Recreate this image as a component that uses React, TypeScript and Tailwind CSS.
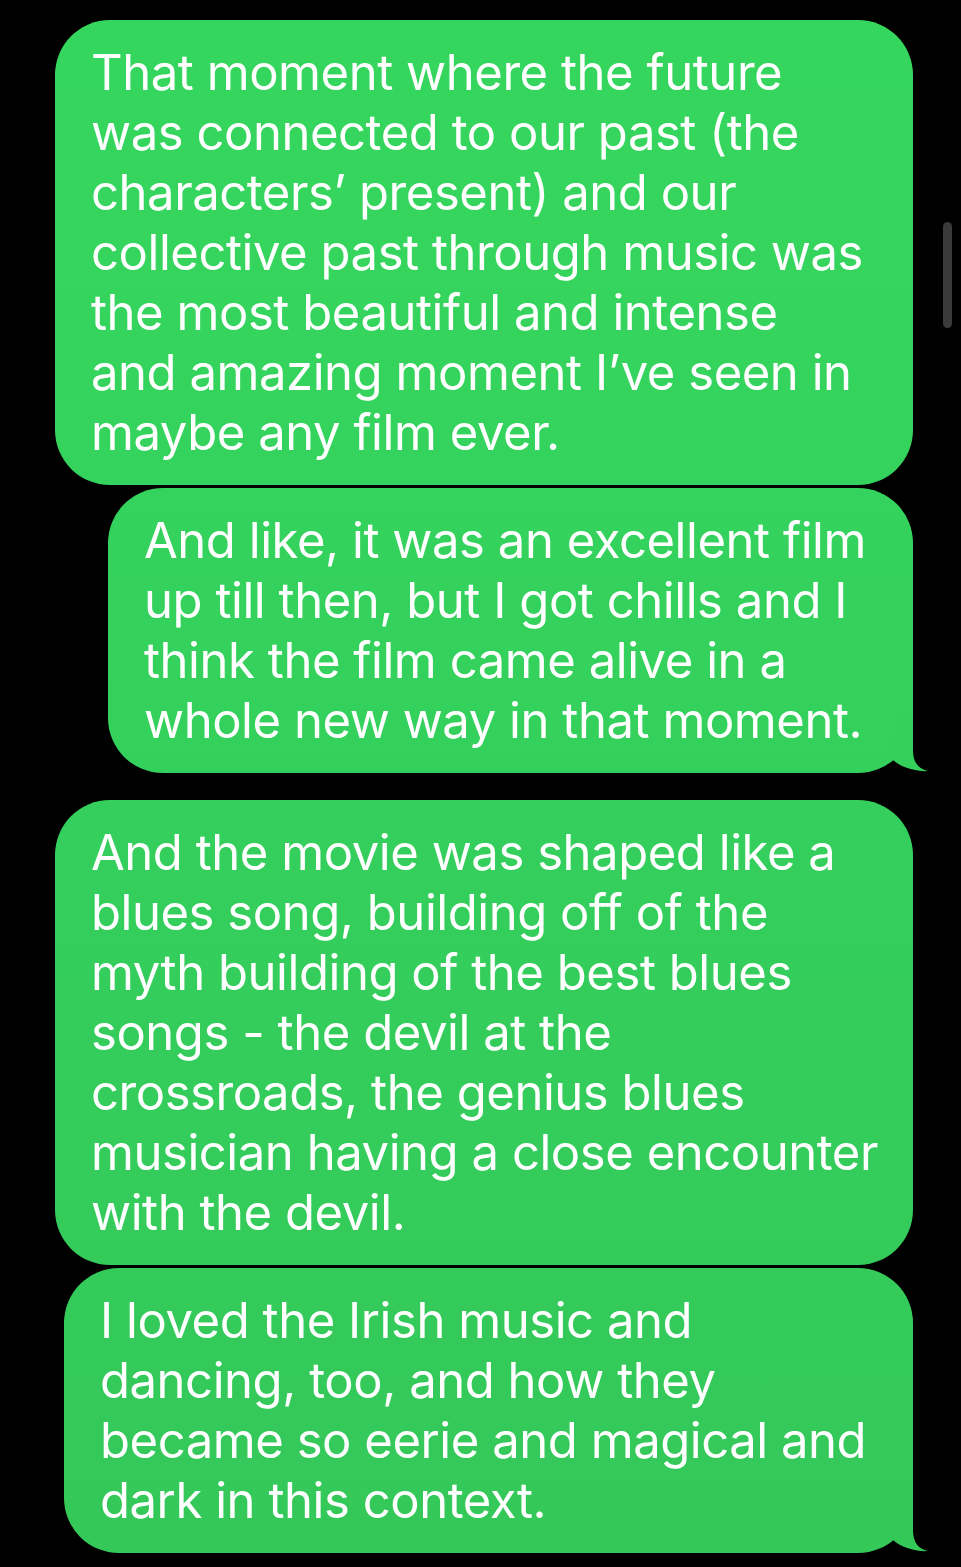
import React from "react";

interface Bubble {
  id: number;
  width: string;
  bg: string;
  tailColor?: string;
  lines: string[];
}

const bubbles: Bubble[] = [
  {
    id: 1,
    width: "w-[858px]",
    bg: "bg-gradient-to-b from-[#35D65E] to-[#34D35D]",
    lines: [
      "That moment where the future",
      "was connected to our past (the",
      "characters\u2019 present) and our",
      "collective past through music was",
      "the most beautiful and intense",
      "and amazing moment I\u2019ve seen in",
      "maybe any film ever.",
    ],
  },
  {
    id: 2,
    width: "w-[805px]",
    bg: "bg-gradient-to-b from-[#34D35D] to-[#34D05C]",
    tailColor: "#34D05C",
    lines: [
      "And like, it was an excellent film",
      "up till then, but I got chills and I",
      "think the film came alive in a",
      "whole new way in that moment.",
    ],
  },
  {
    id: 3,
    width: "w-[858px]",
    bg: "bg-gradient-to-b from-[#34CF5C] to-[#34CB5B]",
    lines: [
      "And the movie was shaped like a",
      "blues song, building off of the",
      "myth building of the best blues",
      "songs - the devil at the",
      "crossroads, the genius blues",
      "musician having a close encounter",
      "with the devil.",
    ],
  },
  {
    id: 4,
    width: "w-[849px]",
    bg: "bg-gradient-to-b from-[#34CB5B] to-[#34C859]",
    tailColor: "#34C859",
    lines: [
      "I loved the Irish music and",
      "dancing, too, and how they",
      "became so eerie and magical and",
      "dark in this context.",
    ],
  },
];

const Tail: React.FC<{ color: string }> = ({ color }) => (
  <svg
    className="absolute right-[-16px] bottom-0"
    width="46"
    height="58"
    viewBox="-30 -57 46 58"
  >
    <path
      d="M0,-57 L0,-22 C0,-10 5,-3 15,-1 C6,0 -12,-4 -20,-12 L-20,-57 Z"
      fill={color}
    />
  </svg>
);

const MessageBubble: React.FC<{ bubble: Bubble }> = ({ bubble }) => (
  <div
    className={`relative ${bubble.width} ${bubble.bg} rounded-[55px] pl-[36px] pt-[23px] pb-[22px] text-white text-[49px] leading-[60px] tracking-[-0.45px]`}
  >
    {bubble.lines.map((line, i) => (
      <div key={i} className="relative z-10 whitespace-nowrap">
        {line}
      </div>
    ))}
    {bubble.tailColor && <Tail color={bubble.tailColor} />}
  </div>
);

export default function App() {
  return (
    <div
      className="relative w-[961px] h-[1567px] bg-black overflow-hidden"
      style={{ fontFamily: "Inter, 'Noto Sans', sans-serif" }}
    >
      <div className="flex flex-col items-end pr-[48px] pt-[20px]">
        <MessageBubble bubble={bubbles[0]} />
        <div className="mt-[3px]">
          <MessageBubble bubble={bubbles[1]} />
        </div>
        <div className="mt-[27px]">
          <MessageBubble bubble={bubbles[2]} />
        </div>
        <div className="mt-[3px]">
          <MessageBubble bubble={bubbles[3]} />
        </div>
      </div>
      <div className="absolute left-[943px] top-[222px] w-[9px] h-[106px] rounded-full bg-[#3a3a3a]" />
    </div>
  );
}
